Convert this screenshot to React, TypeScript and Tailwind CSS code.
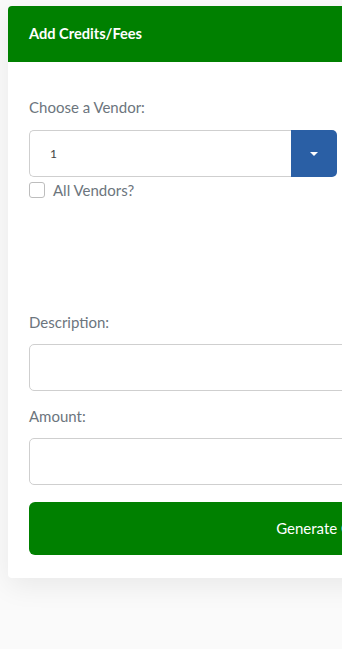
export default function App() {
  return (
    <div className="min-h-[649px] w-full overflow-hidden bg-[#fafafa] pt-[6px] pl-2 font-['Lato',sans-serif]">
      <div className="w-[666px] rounded-[4px] bg-white shadow-[0_8px_28px_rgba(0,0,0,0.07)]">
        <div className="flex h-[56px] items-center rounded-t-[4px] bg-[#008000] px-[21px]">
          <h1 className="text-[14.6px] font-bold text-white">Add Credits/Fees</h1>
        </div>

        <div className="px-[21px] pt-[34px] pb-[23px]">
          <label className="block text-[15px] leading-[22px] text-[#6c757d]">Choose a Vendor:</label>
          <div className="mt-3 flex h-[47px] w-[308px]">
            <div className="flex flex-1 items-center rounded-l-[5px] border border-r-0 border-[#cfcfcf] pl-5 text-[12px] text-[#444]">
              1
            </div>
            <div className="flex w-[46px] items-center justify-center rounded-r-[5px] bg-[#2a5fa5]">
              <span className="h-0 w-0 border-x-[4px] border-t-[4px] border-x-transparent border-t-white" />
            </div>
          </div>

          <div className="mt-[2px] flex h-[22px] items-center gap-2">
            <span className="h-4 w-4 rounded-[3px] border border-[#bdbdbd] bg-white" />
            <span className="text-[15px] text-[#6c757d]">All Vendors?</span>
          </div>

          <label className="mt-[110px] block text-[15px] leading-[22px] text-[#6c757d]">Description:</label>
          <input className="mt-[11px] block h-[47px] w-full rounded-[5px] border border-[#cfcfcf] bg-white outline-none" />

          <label className="mt-[14px] block text-[15px] leading-[22px] text-[#6c757d]">Amount:</label>
          <input className="mt-[11px] block h-[47px] w-full rounded-[5px] border border-[#cfcfcf] bg-white outline-none" />

          <button className="mt-[17px] flex h-[53px] w-full items-center justify-center rounded-[6px] bg-[#008000] pl-[6px] text-[15px] text-white">
            Generate Credit/Fee
          </button>
        </div>
      </div>
    </div>
  );
}
